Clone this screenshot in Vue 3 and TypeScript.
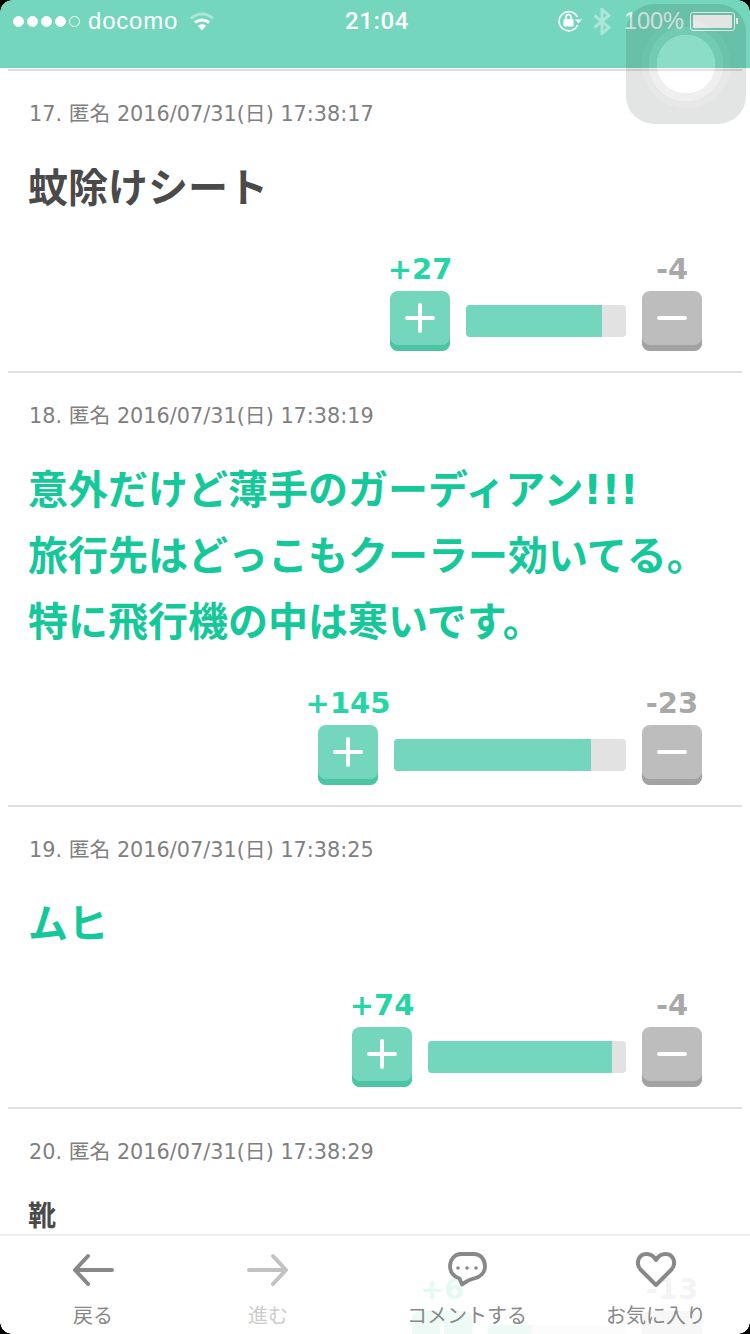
<script setup lang="ts">
interface Post {
  no: number
  time: string
  lines: string[]
  tone: 'dark' | 'hot'
  size: 'large' | 'small'
  plus: number
  minus: number
  barWidth: number
  fill: number
}

const posts: Post[] = [
  { no: 17, time: '17:38:17', lines: ['蚊除けシート'], tone: 'dark', size: 'large', plus: 27, minus: 4, barWidth: 160, fill: 85 },
  {
    no: 18,
    time: '17:38:19',
    lines: ['意外だけど薄手のガーディアン!!!', '旅行先はどっこもクーラー効いてる。', '特に飛行機の中は寒いです。'],
    tone: 'hot',
    size: 'large',
    plus: 145,
    minus: 23,
    barWidth: 232,
    fill: 85
  },
  { no: 19, time: '17:38:25', lines: ['ムヒ'], tone: 'hot', size: 'large', plus: 74, minus: 4, barWidth: 198, fill: 93 },
  { no: 20, time: '17:38:29', lines: ['靴'], tone: 'dark', size: 'small', plus: 6, minus: 13, barWidth: 138, fill: 32 }
]
</script>

<template>
  <div class="screen">
    <header class="status">
      <div class="status-left">
        <span class="dots">
          <i v-for="n in 4" :key="n" class="dot"></i>
          <i class="dot empty"></i>
        </span>
        <span class="carrier">docomo</span>
        <svg class="wifi" width="24" height="19" viewBox="0 0 24 19" fill="none" stroke="#fff" stroke-width="3">
          <path d="M1 6.500C7.500 .5 16.500 .5 23 6.500" opacity=".4" />
          <path d="M5 10.500C9 7 15 7 19 10.500" />
          <path d="M12 18.500l-4.200-4.700c2.300-2 6.100-2 8.400 0z" fill="#fff" stroke="none" />
        </svg>
      </div>
      <div class="clock">21:04</div>
      <div class="status-right">
        <svg class="rotate" width="24" height="22" viewBox="0 0 24 22" fill="none">
          <path d="M19.600 15A9.600 9.600 0 1 1 19.400 7" stroke="#fff" stroke-width="1.600" />
          <path d="M17 9.500h7l-3.500 3.800z" fill="#fff" />
          <rect x="5.500" y="9" width="10" height="7.500" rx="1" fill="#fff" />
          <path d="M8 9V7a2.500 2.500 0 0 1 5 0v2" stroke="#fff" stroke-width="1.600" />
        </svg>
        <svg class="bt" width="18" height="27" viewBox="0 0 18 27" fill="none" stroke="#fff" stroke-width="3" opacity=".4">
          <path d="M1.500 7.500L16 19.500l-7 6V1.500l7 6L1.500 19.500" />
        </svg>
        <span class="percent">100%</span>
        <span class="battery"><i class="battery-fill"></i></span>
        <i class="battery-cap"></i>
      </div>
    </header>

    <main class="list">
      <div class="tail"></div>
      <article v-for="p in posts" :key="p.no" class="post">
        <p class="meta">{{ p.no }}. 匿名 2016/07/31(日) {{ p.time }}</p>
        <div class="body" :class="[p.tone, p.size]">
          <div v-for="line in p.lines" :key="line">{{ line }}</div>
        </div>
        <div class="votes">
          <div class="vote">
            <span class="count plus">+{{ p.plus }}</span>
            <button class="btn up" type="button">
              <svg width="32" height="32" viewBox="0 0 32 32" stroke="#fff" stroke-width="4" stroke-linecap="round">
                <path d="M16 3v26M3 16h26" />
              </svg>
            </button>
          </div>
          <div class="bar" :style="{ width: p.barWidth + 'px' }">
            <div class="bar-fill" :style="{ width: p.fill + '%' }"></div>
          </div>
          <div class="vote">
            <span class="count minus">-{{ p.minus }}</span>
            <button class="btn down" type="button">
              <svg width="32" height="32" viewBox="0 0 32 32" stroke="#fff" stroke-width="4" stroke-linecap="round">
                <path d="M3 16h26" />
              </svg>
            </button>
          </div>
        </div>
      </article>
    </main>

    <nav class="tabs">
      <div class="tab">
        <svg width="42" height="36" viewBox="0 0 42 36" fill="none" stroke="#888" stroke-width="4" stroke-linecap="round" stroke-linejoin="round">
          <path d="M40 18H3M16 4L3 18l13 14" />
        </svg>
        <span>戻る</span>
      </div>
      <div class="tab off">
        <svg width="42" height="36" viewBox="0 0 42 36" fill="none" stroke="#c2c2c2" stroke-width="4" stroke-linecap="round" stroke-linejoin="round">
          <path d="M2 18h37M26 4l13 14-13 14" />
        </svg>
        <span>進む</span>
      </div>
      <div class="tab">
        <svg width="46" height="36" viewBox="0 0 46 36" fill="none" stroke="#888" stroke-width="3.800" stroke-linejoin="round">
          <path d="M17 2h13c7 0 11 6 11 12.500S36 25 30 26.500c-4.500 1-8 2.500-12 6l-2.500-6C10 25 6 20 6 14.500 6 7.500 10.500 2 17 2z" />
          <circle cx="14" cy="16" r="1.800" fill="#888" stroke="none" />
          <circle cx="23" cy="16" r="1.800" fill="#888" stroke="none" />
          <circle cx="32" cy="16" r="1.800" fill="#888" stroke="none" />
        </svg>
        <span>コメントする</span>
      </div>
      <div class="tab">
        <svg width="44" height="36" viewBox="0 0 44 36" fill="none" stroke="#888" stroke-width="4" stroke-linejoin="round">
          <path d="M22 33L6.500 17.500C1.500 12 4 2 12.500 2c4.500 0 7.500 2.500 9.500 6 2-3.500 5-6 9.500-6 8.500 0 11 10 6 15.500z" />
        </svg>
        <span>お気に入り</span>
      </div>
    </nav>

    <div class="assist"></div>

    <i class="corner tl"></i>
    <i class="corner tr"></i>
    <i class="corner bl"></i>
    <i class="corner br"></i>
  </div>
</template>

<style scoped>
.screen {
  position: relative;
  width: 750px;
  height: 1334px;
  overflow: hidden;
  background: #fff;
  font-family: "DejaVu Sans", "Noto Sans CJK JP", sans-serif;
}

/* ステータスバー */
.status {
  height: 68px;
  background: #74d6bc;
  color: #fff;
  display: flex;
  align-items: flex-start;
  padding: 7px 12px 0 13px;
  box-sizing: border-box;
  position: relative;
}

.status-left {
  display: flex;
  align-items: center;
  height: 28px;
  flex: 1;
}

.dots {
  display: flex;
  gap: 3px;
}

.dot {
  width: 11px;
  height: 11px;
  border-radius: 50%;
  background: #fff;
  border: 1px solid #fff;
  box-sizing: border-box;
}

.dot.empty {
  background: transparent;
}

.carrier {
  font: 24px "Liberation Sans", sans-serif;
  letter-spacing: .8px;
  margin-left: 8px;
}

.wifi {
  margin-left: 12px;
}

.clock {
  position: absolute;
  left: 345px;
  top: 7px;
  font: 500 24px/28px "Roboto", sans-serif;
  letter-spacing: 0.6px;
}

.status-right {
  display: flex;
  align-items: center;
  height: 28px;
}

.bt {
  margin-left: 11px;
}

.percent {
  font: 23.500px "Liberation Sans", sans-serif;
  margin-left: 13px;
  opacity: .85;
}

.battery {
  display: block;
  width: 45px;
  height: 19px;
  margin-left: 6px;
  border: 1px solid #fff;
  border-radius: 3px;
  box-sizing: border-box;
  padding: 2px;
}

.battery-fill {
  display: block;
  height: 100%;
  background: #fff;
  border-radius: 1px;
}

.battery-cap {
  width: 2px;
  height: 6px;
  margin-left: 1px;
  background: #fff;
}

/* リスト */
.list {
  padding: 0 8px;
}

.tail {
  height: 1px;
  border-bottom: 2px solid #e0e0e0;
}

.post {
  border-bottom: 2px solid #e0e0e0;
  padding: 28px 0 20px 21px;
}

.meta {
  margin: 0;
  font-size: 20.800px;
  line-height: 30px;
  color: #808080;
}

.body {
  margin-top: 26px;
  margin-left: -1px;
  font-weight: 700;
  white-space: nowrap;
}

.body.large {
  font-size: 40px;
  line-height: 66px;
}

.body.small {
  font-size: 28px;
  line-height: 48px;
}

.body.dark {
  color: #4a4a4a;
}

.body.hot {
  color: #14c89a;
}

.votes {
  display: flex;
  justify-content: flex-end;
  align-items: flex-end;
  gap: 16px;
  margin: 31px 40px 0 0;
}

.vote {
  display: flex;
  flex-direction: column;
  align-items: center;
  width: 60px;
}

.count {
  font-size: 29px;
  font-weight: 700;
  line-height: 34px;
  white-space: nowrap;
  margin-bottom: 5px;
}

.count.plus {
  color: #26d5a5;
}

.count.minus {
  color: #a8a8a8;
}

.btn {
  width: 60px;
  height: 60px;
  padding: 0 0 6px;
  border: 0;
  border-radius: 8px;
  display: flex;
  align-items: center;
  justify-content: center;
}

.btn.up {
  background: #74d6bc;
  box-shadow: inset 0 -6px 0 #4cc5a5;
}

.btn.down {
  background: #bdbdbd;
  box-shadow: inset 0 -6px 0 #a2a2a2;
}

.bar {
  height: 32px;
  margin-bottom: 14px;
  background: #e2e2e2;
  border-radius: 4px;
  overflow: hidden;
}

.bar-fill {
  height: 100%;
  background: #74d6bc;
}

/* 下部ツールバー */
.tabs {
  position: absolute;
  left: 0;
  right: 0;
  bottom: 0;
  height: 100px;
  box-sizing: border-box;
  border-top: 2px solid #eee;
  background: rgba(255, 255, 255, .87);
  display: grid;
  grid-template-columns: 186px 164px 234px 144px;
  padding-top: 16px;
}

.tab {
  display: flex;
  flex-direction: column;
  align-items: center;
  font-size: 20px;
  line-height: 30px;
  color: #888;
  font-family: "Noto Sans CJK JP", sans-serif;
}

.tab span {
  margin-top: 12px;
  white-space: nowrap;
}

.tab.off {
  color: #ccc;
}

/* AssistiveTouch */
.assist {
  position: absolute;
  left: 626px;
  top: 4px;
  width: 120px;
  height: 120px;
  border-radius: 28px;
  background: radial-gradient(
    circle at center,
    rgba(255, 255, 255, .165) 29px,
    rgba(116, 116, 116, .115) 29.500px 37px,
    rgba(42, 42, 42, .108) 37.500px 44px,
    rgba(0, 10, 10, .11) 44.500px
  );
}

/* 画面の角 */
.corner {
  position: absolute;
  width: 12px;
  height: 12px;
}

.tl {
  left: 0;
  top: 0;
  background: radial-gradient(circle at 100% 100%, transparent 11.500px, #000 12px);
}

.tr {
  right: 0;
  top: 0;
  background: radial-gradient(circle at 0 100%, transparent 11.500px, #000 12px);
}

.bl {
  left: 0;
  bottom: 0;
  background: radial-gradient(circle at 100% 0, transparent 11.500px, #000 12px);
}

.br {
  right: 0;
  bottom: 0;
  background: radial-gradient(circle at 0 0, transparent 11.500px, #000 12px);
}
</style>
